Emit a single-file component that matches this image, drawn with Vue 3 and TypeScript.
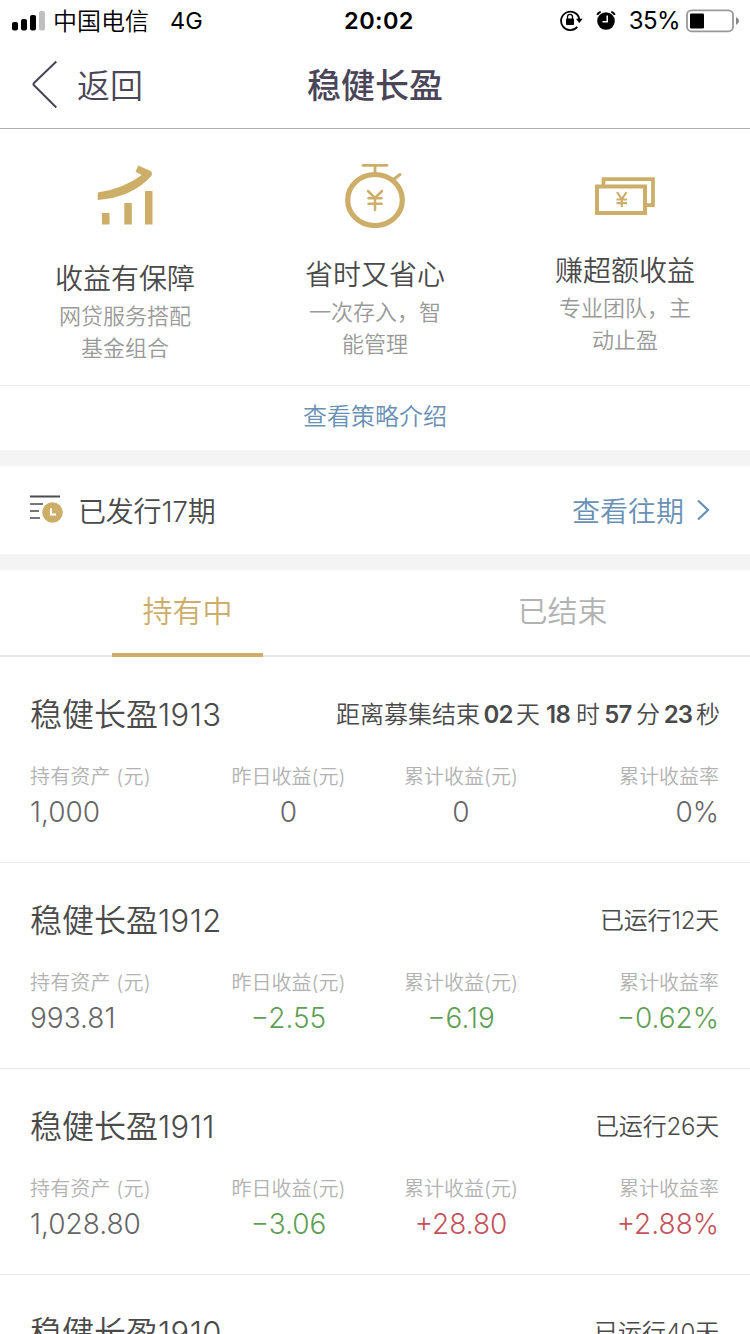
<script setup lang="ts">
type Tone = 'flat' | 'down' | 'up'

interface Feature {
  icon: 'growth' | 'watch' | 'cash'
  title: string
  lines: string[]
}

interface Holding {
  name: string
  days?: number
  countdown?: { value: string; unit: string }[]
  asset: string
  daily: string
  dailyTone: Tone
  total: string
  rate: string
  totalTone: Tone
}

const features: Feature[] = [
  { icon: 'growth', title: '收益有保障', lines: ['网贷服务搭配', '基金组合'] },
  { icon: 'watch', title: '省时又省心', lines: ['一次存入，智', '能管理'] },
  { icon: 'cash', title: '赚超额收益', lines: ['专业团队，主', '动止盈'] },
]

const holdings: Holding[] = [
  {
    name: '1913',
    countdown: [
      { value: '02', unit: '天' },
      { value: '18', unit: '时' },
      { value: '57', unit: '分' },
      { value: '23', unit: '秒' },
    ],
    asset: '1,000', daily: '0', dailyTone: 'flat', total: '0', rate: '0%', totalTone: 'flat',
  },
  { name: '1912', days: 12, asset: '993.81', daily: '−2.55', dailyTone: 'down', total: '−6.19', rate: '−0.62%', totalTone: 'down' },
  { name: '1911', days: 26, asset: '1,028.80', daily: '−3.06', dailyTone: 'down', total: '+28.80', rate: '+2.88%', totalTone: 'up' },
]
</script>

<template>
  <div class="screen">
    <div class="status">
      <div class="status-left">
        <svg class="signal" width="34" height="22" viewBox="0 0 34 22">
          <rect x="0" y="12" width="6" height="8.5" rx="2" />
          <rect x="9" y="9" width="6" height="11.5" rx="2" />
          <rect x="18" y="5" width="6" height="15.5" rx="2" />
          <rect x="27" y="1" width="6" height="19.5" rx="2" fill="#bfbfbf" />
        </svg>
        <span class="carrier">中国电信</span>
        <span class="network">4G</span>
      </div>
      <div class="clock">20:02</div>
      <div class="status-right">
        <svg width="24" height="22" viewBox="0 0 24 22">
          <path d="M17.300 16.800A9.200 9.200 0 1 1 19.300 9" fill="none" stroke="#000" stroke-width="1.800" />
          <path d="M16 8.800H22.700L19.300 13Z" />
          <rect x="6" y="8.500" width="8" height="6.400" rx="1" />
          <path d="M7.500 9V6.800a2.500 2.500 0 0 1 5 0V9" fill="none" stroke="#000" stroke-width="1.300" />
        </svg>
        <svg class="alarm" width="20" height="20" viewBox="0 0 20 20">
          <circle cx="10" cy="10" r="8.800" />
          <path d="M1.200 3.900Q2.200 1.700 4.700 .9M18.800 3.900Q17.800 1.700 15.300 .9" fill="none" stroke="#000" stroke-width="2" />
          <path d="M11.200 4.500v6.300H6.500" fill="none" stroke="#fff" stroke-width="1.500" />
        </svg>
        <span class="percent">35%</span>
        <svg class="battery" width="53" height="24" viewBox="0 0 53 24">
          <rect x="1" y="1.300" width="46" height="21" rx="4.500" fill="none" stroke="#999" stroke-width="1.800" />
          <rect x="4" y="4.500" width="14" height="15" rx="1.300" />
          <path d="M50 8q3 1.500 3 4t-3 4z" fill="#888" />
        </svg>
      </div>
    </div>

    <header class="nav">
      <div class="back">
        <svg width="26" height="50" viewBox="0 0 26 50">
          <path d="M24.300 1.500L2 23Q1 24.200 2 25.300L24.300 47.500" fill="none" stroke="#4a4558" stroke-width="2" />
        </svg>
        <span>返回</span>
      </div>
      <h1>稳健长盈</h1>
    </header>

    <section class="features">
      <div v-for="f in features" :key="f.icon" class="feature" :class="f.icon">
        <svg v-if="f.icon === 'growth'" width="64" height="68" viewBox="0 0 64 68">
          <g fill="#cdae69">
            <rect x="9" y="53" width="7.500" height="11.500" />
            <rect x="31.300" y="43" width="7.500" height="21.500" />
            <rect x="52" y="31" width="7.500" height="33.500" />
            <path d="M4.700 32.500Q30 29 48.700 15L42.500 11.700L45.300 5.500L57.500 11Q60 13 58.300 16Q39 37.500 4.700 40Z" />
          </g>
        </svg>
        <svg v-else-if="f.icon === 'watch'" width="64" height="68" viewBox="0 0 64 68">
          <g fill="none" stroke="#cdae69" stroke-width="2.500" stroke-linecap="round">
            <ellipse cx="32" cy="40" rx="27.300" ry="25.500" stroke-width="5.200" />
            <path d="M20 5.300H44M32 6v8" stroke-width="2.800" />
            <path d="M50.500 19.500L57 14.500" stroke-width="3" />
            <path d="M25 31l7 7 7-7M32 38v12M25.500 38.300h13M25.500 43.800h13" />
          </g>
        </svg>
        <svg v-else width="64" height="68" viewBox="0 0 64 68">
          <g fill="none" stroke="#cdae69">
            <path d="M10.500 26V19.200H60V45.200H53" stroke-width="3.700" />
            <rect x="4" y="26.500" width="48" height="26.500" stroke-width="4" />
            <path d="M24 32l4.800 7 4.800-7M28.800 38.500v8.500M23.500 39.500h10.500M23.500 43.200h10.500" stroke-width="2.200" />
          </g>
        </svg>
        <h2>{{ f.title }}</h2>
        <p v-for="line in f.lines" :key="line">{{ line }}</p>
      </div>
    </section>
    <div class="strategy">查看策略介绍</div>

    <section class="issued">
      <svg width="34" height="30" viewBox="0 0 34 30">
        <path d="M0 1.500H30" stroke="#4c4c4c" stroke-width="2" />
        <path d="M0 9H13M0 16H9M0 23H10" stroke="#777" stroke-width="2" />
        <circle cx="22.500" cy="17.500" r="10.300" fill="#cdae69" />
        <path d="M21 13.200v6.300h5" fill="none" stroke="#fff" stroke-width="2" />
      </svg>
      <span class="issued-text">已发行17期</span>
      <span class="past">查看往期</span>
      <svg class="chevron" width="14" height="22" viewBox="0 0 14 22">
        <path d="M1 1.500L11 11L1 20.500" fill="none" stroke="#6990b5" stroke-width="2.200" />
      </svg>
    </section>

    <nav class="tabs">
      <div class="tab active"><span>持有中</span></div>
      <div class="tab"><span>已结束</span></div>
    </nav>

    <article v-for="h in holdings" :key="h.name" class="holding">
      <div class="head">
        <h3>稳健长盈<span>{{ h.name }}</span></h3>
        <div v-if="h.countdown" class="countdown">
          <span>距离募集结束</span>
          <template v-for="part in h.countdown" :key="part.unit">
            <b>{{ part.value }}</b><span>{{ part.unit }}</span>
          </template>
        </div>
        <div v-else class="running">已运行{{ h.days }}天</div>
      </div>
      <div class="stats">
        <div class="stat first"><label>持有资产 (元)</label><strong>{{ h.asset }}</strong></div>
        <div class="stat"><label>昨日收益(元)</label><strong :class="h.dailyTone">{{ h.daily }}</strong></div>
        <div class="stat"><label>累计收益(元)</label><strong :class="h.totalTone">{{ h.total }}</strong></div>
        <div class="stat last"><label>累计收益率</label><strong :class="h.totalTone">{{ h.rate }}</strong></div>
      </div>
    </article>
    <article class="holding">
      <div class="head">
        <h3>稳健长盈<span>1910</span></h3>
        <div class="running">已运行40天</div>
      </div>
    </article>
  </div>
</template>

<style>
body {
  background: #fff;
  overflow: hidden;
}
</style>

<style scoped>
.screen {
  width: 750px;
  height: 1334px;
  overflow: hidden;
  background: #fff;
  color: #4a4a4a;
  font-family: Inter, "Noto Sans CJK SC", sans-serif;
  font-weight: 350;
  white-space: nowrap;
}
h1, h2, h3, p { margin: 0; font-weight: 350; }
svg { display: block; flex: none; }

.status {
  display: grid;
  grid-template-columns: 1fr auto 1fr;
  align-items: center;
  height: 41px;
  color: #000;
  font-weight: 400;
  font-size: 24px;
  line-height: 40px;
}
.status-left { display: flex; align-items: center; padding-left: 12px; }
.carrier { margin: 1px 0 -1px 7px; font-weight: 350; }
.network { margin-left: 21px; font-size: 23.500px; }
.clock { padding-left: 8px; font-size: 23.500px; font-weight: 600; letter-spacing: 0.4px; }
.status-right { display: flex; align-items: center; justify-content: flex-end; padding-right: 11px; }
.alarm { margin-left: 12px; }
.percent { margin-left: 13px; letter-spacing: -0.6px; }
.battery { margin-left: 6px; }

.nav {
  display: grid;
  grid-template-columns: 1fr auto 1fr;
  align-items: center;
  height: 87px;
  border-bottom: 1px solid #aeaeae;
  color: #4a4558;
  line-height: 46px;
}
.back { display: flex; align-items: center; gap: 19px; padding-left: 32px; font-size: 33px; }
.back span { padding-top: 2px; }
.nav h1 { padding-top: 2px; font-size: 34px; font-weight: 500; }

.features { display: grid; grid-template-columns: repeat(3, 250px); height: 225px; padding-top: 31px; border-bottom: 1px solid #e9e9e9; }
.feature { display: flex; flex-direction: column; align-items: center; text-align: center; }
.feature h2 { margin: 31px 0 1px; font-size: 28px; line-height: 40px; }
.feature.watch h2 { margin-top: 27px; }
.feature.cash h2 { margin-top: 23px; }
.feature p { color: #999; font-size: 22px; line-height: 32px; }

.strategy { height: 64px; border-bottom: 16px solid #f4f4f4; color: #6990b5; font-size: 24px; line-height: 61px; text-align: center; }

.issued { display: flex; align-items: center; height: 88px; padding: 0 39px 0 30px; border-bottom: 16px solid #f4f4f4; font-size: 28px; }
.issued-text { margin: -1px 0 0 14px; letter-spacing: -0.2px; }
.past { margin: -1px 0 0 auto; color: #6990b5; }
.chevron { margin-left: 13px; }

.tabs { display: grid; grid-template-columns: 375px 375px; height: 85px; border-bottom: 2px solid #e9e9e9; color: #b2b2b2; font-size: 30px; line-height: 83px; }
.tab { display: flex; justify-content: center; }
.tab span { box-sizing: border-box; width: 151px; height: 87px; text-align: center; }
.tab.active { color: #cdae69; }
.tab.active span { border-bottom: 4px solid #cdae69; }

.holding { box-sizing: border-box; height: 206px; padding: 35px 31px 0 30px; border-bottom: 1px solid #e9e9e9; }
.head { display: flex; justify-content: space-between; align-items: center; height: 46px; line-height: 46px; }
.head h3 { font-size: 32px; }
.head h3 span { font-size: 31px; letter-spacing: 0.4px; }
.countdown, .running { font-size: 24px; }
.running { letter-spacing: -0.2px; }
.countdown { display: flex; align-items: center; margin-right: -1px; }
.countdown b { width: 36px; font-size: 24px; font-weight: 600; letter-spacing: -0.8px; text-align: center; }

.stats { display: grid; grid-template-columns: 172px 173px 172px 172px; margin-top: 25px; }
.stat { display: flex; flex-direction: column; align-items: center; }
.stat.first { align-items: flex-start; }
.stat.last { align-items: flex-end; }
.stat label { color: #b2b2b2; font-size: 20px; line-height: 28px; }
.stat.first label { letter-spacing: 0.15px; }
.stat strong { margin-top: 3px; color: #666; font-size: 28px; font-weight: 300; line-height: 36px; }
.stat strong.down { color: #5f9f55; }
.stat strong.up { color: #c4525c; }
</style>
